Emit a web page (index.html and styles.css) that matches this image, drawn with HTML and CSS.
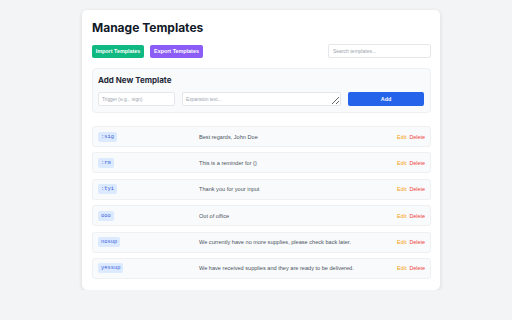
FILE: index.html
```html
<!DOCTYPE html>
<html lang="en">
<head>
    <meta charset="UTF-8">
    <meta name="viewport" content="width=device-width, initial-scale=1.0">
    <title>Manage Templates</title>
    <link rel="stylesheet" href="styles.css">
</head>
<body>
    <div class="container">
        <h1>Manage Templates</h1>
        <div class="toolbar">
            <div class="actions">
                <button class="btn btn-import">Import Templates</button>
                <button class="btn btn-export">Export Templates</button>
            </div>
            <input class="search" type="text" placeholder="Search templates...">
        </div>

        <div class="add-box">
            <h2>Add New Template</h2>
            <div class="add-row">
                <input class="trigger" type="text" placeholder="Trigger (e.g., :sign)">
                <textarea class="expansion" placeholder="Expansion text..."></textarea>
                <button class="btn btn-add">Add</button>
            </div>
        </div>

        <div class="list">
            <div class="item">
                <div class="key"><code>:sig</code></div>
                <div class="text">Best regards, John Doe</div>
                <div class="links"><a class="edit">Edit</a><a class="delete">Delete</a></div>
            </div>
            <div class="item">
                <div class="key"><code>:rm</code></div>
                <div class="text">This is a reminder for {}</div>
                <div class="links"><a class="edit">Edit</a><a class="delete">Delete</a></div>
            </div>
            <div class="item">
                <div class="key"><code>:tyi</code></div>
                <div class="text">Thank you for your input</div>
                <div class="links"><a class="edit">Edit</a><a class="delete">Delete</a></div>
            </div>
            <div class="item">
                <div class="key"><code>ooo</code></div>
                <div class="text">Out of office</div>
                <div class="links"><a class="edit">Edit</a><a class="delete">Delete</a></div>
            </div>
            <div class="item">
                <div class="key"><code>nosup</code></div>
                <div class="text">We currently have no more supplies, please check back later.</div>
                <div class="links"><a class="edit">Edit</a><a class="delete">Delete</a></div>
            </div>
            <div class="item">
                <div class="key"><code>yessup</code></div>
                <div class="text">We have received supplies and they are ready to be delivered.</div>
                <div class="links"><a class="edit">Edit</a><a class="delete">Delete</a></div>
            </div>
        </div>
    </div>
</body>
</html>
```

FILE: styles.css
```css
* {
    margin: 0;
    padding: 0;
    box-sizing: border-box;
}
body {
    font-family: "Liberation Sans", Arial, sans-serif;
    background-color: #f3f4f6;
    color: #374151;
}
.container {
    width: 358px;
    margin: 10px 0 0 82px;
    padding: 10px 9px 11px 10px;
    background-color: #fff;
    border-radius: 5px;
    box-shadow: 0 1px 4px rgba(0, 0, 0, 0.12);
}
h1 {
    font-family: Inter, sans-serif;
    font-size: 12px;
    font-weight: 700;
    line-height: 16px;
    color: #111827;
    margin: 0 0 8px 0;
}
.toolbar {
    display: flex;
    justify-content: space-between;
    align-items: center;
    height: 14px;
    margin-bottom: 10px;
}
.actions {
    display: flex;
    gap: 6px;
}
.btn {
    border: none;
    color: #fff;
    font-family: "Liberation Sans", Arial, sans-serif;
    font-size: 5.4px;
    font-weight: 700;
    border-radius: 2px;
    height: 13px;
    cursor: pointer;
}
.btn-import {
    width: 52px;
    background-color: #10b981;
}
.btn-export {
    width: 53px;
    background-color: #8b5cf6;
}
.search {
    width: 103px;
    height: 14px;
    border: 1px solid #e5e7eb;
    border-radius: 2px;
    padding: 0 4px;
    font-size: 5px;
    font-family: "Liberation Sans", Arial, sans-serif;
}
input::placeholder,
textarea::placeholder {
    color: #9ca3af;
}
.add-box {
    background-color: #f9fafb;
    border: 1px solid #eef0f2;
    border-radius: 4px;
    padding: 6px 6px 6px 5px;
    margin-bottom: 13px;
}
h2 {
    font-family: Inter, sans-serif;
    font-size: 8px;
    font-weight: 700;
    line-height: 10px;
    color: #1f2937;
    margin: 0 0 7px 0;
}
.add-row {
    display: flex;
    gap: 7px;
}
.trigger,
.expansion {
    height: 14px;
    border: 1px solid #e5e7eb;
    border-radius: 2px;
    background-color: #fff;
    padding: 0 3px;
    font-size: 4.8px;
    font-family: "Liberation Sans", Arial, sans-serif;
}
.trigger {
    width: 77px;
}
.expansion {
    width: 159px;
    padding-top: 4px;
    line-height: 6px;
}
.btn-add {
    width: 76px;
    height: 14px;
    background-color: #2563eb;
    font-size: 5.4px;
}
.list {
    display: flex;
    flex-direction: column;
    gap: 5.4px;
}
.item {
    display: grid;
    grid-template-columns: 101px 1fr auto;
    align-items: center;
    height: 21px;
    padding: 0 5px;
    background-color: #f9fafb;
    border: 1px solid #eef0f2;
    border-radius: 3px;
}
.key {
    display: flex;
}
.key code {
    font-family: "Liberation Mono", monospace;
    font-size: 5.4px;
    line-height: 10px;
    padding: 0 3px;
    background-color: #dbeafe;
    color: #3b5bdb;
    border-radius: 2px;
}
.text {
    font-size: 5.6px;
    color: #4b5563;
}
.links {
    display: flex;
    gap: 3px;
    font-size: 5.4px;
}
.edit {
    color: #f59e0b;
}
.delete {
    color: #ef4444;
}
```
